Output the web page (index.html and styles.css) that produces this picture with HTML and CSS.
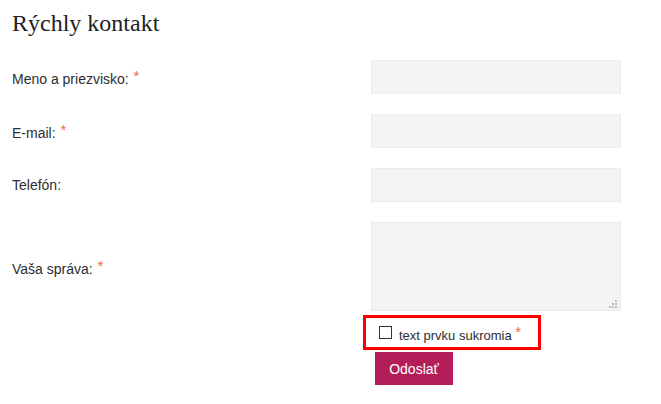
FILE: index.html
```html
<!DOCTYPE html>
<html lang="sk">
<head>
<meta charset="UTF-8">
<meta name="viewport" content="width=device-width, initial-scale=1.0">
<link rel="stylesheet" href="styles.css">
</head>
<body>

<div class="container">
  <h2 class="title">Rýchly kontakt</h2>

  <form class="contact-form" action="#" method="post">
    <div class="row">
      <label for="name-field">Meno a priezvisko: <span class="req">*</span></label>
      <input type="text" id="name-field" class="field">
    </div>
    <div class="row">
      <label for="mail-field">E-mail: <span class="req">*</span></label>
      <input type="text" id="mail-field" class="field">
    </div>
    <div class="row">
      <label for="phone-field">Telefón:</label>
      <input type="text" id="phone-field" class="field">
    </div>
    <div class="row row-message">
      <label for="message-field">Vaša správa: <span class="req">*</span></label>
      <div class="area-wrap">
        <textarea id="message-field" class="field area"></textarea>
        <!-- resize grip -->
        <svg class="grip" width="8" height="8" viewBox="0 0 8 8">
          <rect x="6" y="0" width="2" height="2" fill="#bdbdbd"/>
          <rect x="3" y="3" width="2" height="2" fill="#bdbdbd"/>
          <rect x="6" y="3" width="2" height="2" fill="#bdbdbd"/>
          <rect x="0" y="6" width="2" height="2" fill="#bdbdbd"/>
          <rect x="3" y="6" width="2" height="2" fill="#bdbdbd"/>
          <rect x="6" y="6" width="2" height="2" fill="#bdbdbd"/>
        </svg>
      </div>
    </div>

    <div class="consent">
      <span class="check"></span>
      <span class="consent-text">text prvku sukromia <span class="req">*</span></span>
    </div>

    <button type="button" class="button">Odoslať</button>
  </form>
</div>

</body>
</html>
```

FILE: styles.css
```css
body {
  font-family: "Liberation Sans", Arial, sans-serif;
  font-size: 14px;
  color: #2d2d33;
  margin: 0;
  padding: 0;
  background-color: #fff;
}
.container {
  padding: 0 12px;
}
.title {
  font-family: "Liberation Serif", Georgia, serif;
  font-weight: normal;
  font-size: 24px;
  line-height: 30px;
  margin: 8px 0 22px 0;
  color: #222;
}
.row {
  display: flex;
  align-items: center;
  margin-bottom: 20px;
}
.row label {
  width: 359px;
}
.row-message {
  margin-top: 1px;
  margin-bottom: 0;
}
.req {
  color: #f06a3b;
  font-size: 15px;
  margin-left: 1px;
  vertical-align: 3px;
}
.field {
  width: 250px;
  height: 34px;
  box-sizing: border-box;
  background-color: #f4f4f4;
  border: 1px solid #ebebeb;
  margin: 0;
  padding: 6px;
}
.area-wrap {
  position: relative;
  width: 250px;
  height: 89px;
}
.area {
  height: 89px;
  resize: none;
  display: block;
}
.grip {
  position: absolute;
  right: 4px;
  bottom: 3px;
}
.consent {
  display: flex;
  align-items: center;
  width: 178px;
  height: 35px;
  box-sizing: border-box;
  margin: 4px 0 0 351px;
  padding-left: 13px;
  border: 3px solid #ff0000;
  font-size: 13px;
}
.check {
  width: 13px;
  height: 13px;
  box-sizing: border-box;
  border: 1px solid #333;
  margin-right: 7px;
}
.consent-text .req {
  margin-left: 0;
}
.button {
  display: block;
  width: 78px;
  height: 33px;
  margin: 2px 0 0 363px;
  padding: 0;
  border: none;
  background-color: #b31d58;
  color: #fff;
  font-family: "Liberation Sans", Arial, sans-serif;
  font-size: 14px;
}
```
